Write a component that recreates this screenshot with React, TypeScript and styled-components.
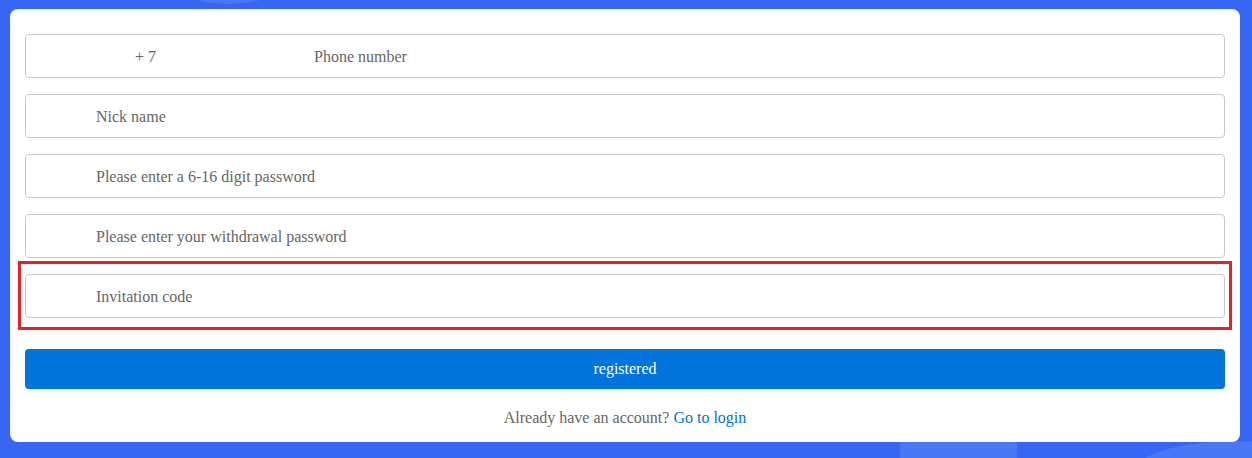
import styled, { createGlobalStyle } from "styled-components";

const GlobalStyle = createGlobalStyle`
  html, body {
    margin: 0;
    padding: 0;
    background: #3866f4;
    font-family: "Liberation Serif", "Times New Roman", serif;
  }
  #root {
    min-height: 458px;
  }
`;

const Page = styled.div`
  position: relative;
  overflow: hidden;
  height: 458px;
  padding: 9px 12px 0 10px;
  box-sizing: border-box;
`;

const Blob = styled.div<{ $left: number; $top: number; $w: number; $h: number; $square?: boolean }>`
  position: absolute;
  left: ${({ $left }) => $left}px;
  top: ${({ $top }) => $top}px;
  width: ${({ $w }) => $w}px;
  height: ${({ $h }) => $h}px;
  border-radius: ${({ $square }) => ($square ? "0" : "50%")};
  background: #4a77f5;
`;

const Card = styled.div`
  position: relative;
  background: #fff;
  border-radius: 8px;
  padding: 25px 15px 14px;
  display: flex;
  flex-direction: column;
`;

const Form = styled.div`
  display: flex;
  flex-direction: column;
  gap: 16px;
`;

const Field = styled.div`
  position: relative;
  height: 44px;
  box-sizing: border-box;
  border: 1px solid #c8c8c8;
  border-radius: 4px;
  display: flex;
  align-items: center;
  padding: 2px 0 0 70px;
  font-size: 16px;
  color: #666;
`;

const PhoneField = styled(Field)`
  padding-left: 109px;
`;

const Prefix = styled.span`
  width: 179px;
  color: #666;
`;

const Placeholder = styled.span`
  color: #666;
`;

const Highlight = styled.div`
  position: absolute;
  top: -14px;
  bottom: -13px;
  left: -8px;
  right: -8px;
  border: 3px solid #ee1c25;
  pointer-events: none;
`;

const SubmitButton = styled.button`
  margin-top: 31px;
  height: 40px;
  border: none;
  border-radius: 4px;
  background: #0073dd;
  color: #fff;
  font-family: inherit;
  font-size: 16px;
  cursor: pointer;
`;

const Footer = styled.div`
  margin-top: 19px;
  line-height: 20px;
  text-align: center;
  font-size: 16px;
  color: #666;
`;

const LoginLink = styled.a`
  color: #0073dd;
  text-decoration: none;
`;

const fields = [
  "Nick name",
  "Please enter a 6-16 digit password",
  "Please enter your withdrawal password",
];

export default function App() {
  return (
    <>
      <GlobalStyle />
      <Page>
        <Blob $left={173} $top={-40} $w={110} $h={44} />
        <Blob $left={900} $top={436} $w={117} $h={60} $square />
        <Blob $left={1136} $top={441} $w={200} $h={60} />
        <Card>
          <Form>
            <PhoneField>
              <Prefix>+ 7</Prefix>
              <Placeholder>Phone number</Placeholder>
            </PhoneField>
            {fields.map((f) => (
              <Field key={f}>
                <Placeholder>{f}</Placeholder>
              </Field>
            ))}
            <Field>
              <Placeholder>Invitation code</Placeholder>
              <Highlight />
            </Field>
          </Form>
          <SubmitButton>registered</SubmitButton>
          <Footer>
            Already have an account? <LoginLink href="#">Go to login</LoginLink>
          </Footer>
        </Card>
      </Page>
    </>
  );
}
